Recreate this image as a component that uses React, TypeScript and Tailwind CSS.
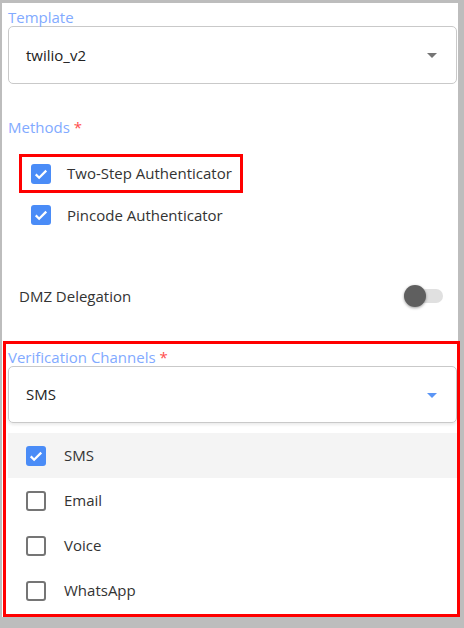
import React from "react";

const font = { fontFamily: '"Open Sans", "Liberation Sans", sans-serif' };

function Arrow({ color }: { color: string }) {
  return (
    <svg viewBox="0 0 24 24" className="w-6 h-6" fill={color}>
      <path d="M7 10l5 5 5-5z" />
    </svg>
  );
}

function Checked() {
  return (
    <div className="w-5 h-5 rounded-[3px] bg-[#4a8cf7] flex items-center justify-center shrink-0">
      <svg viewBox="0 0 24 24" className="w-[18px] h-[18px]" fill="none" stroke="white" strokeWidth="3">
        <path d="M5 12.5l4.5 4.5L19 7.5" />
      </svg>
    </div>
  );
}

function Unchecked() {
  return <div className="w-5 h-5 rounded-[3px] border-2 border-[#757575] shrink-0" />;
}

export default function App() {
  const channels = [
    { name: "SMS", on: true },
    { name: "Email", on: false },
    { name: "Voice", on: false },
    { name: "WhatsApp", on: false },
  ];

  return (
    <div className="w-[464px] h-[628px] bg-[#bdbdbd] overflow-hidden" style={font}>
      <div className="ml-[2px] mt-[3px] w-[456px] h-[614px] bg-white">
        <div className="pt-[5px] ml-[6px] h-[23px] leading-[18px] text-[15px] text-[#82aaff]">Template</div>
        <div className="ml-[6px] w-[449px] h-[58px] rounded-[5px] border border-[#c9c9c9] flex items-center justify-between pl-[17px] pr-[12px] text-[15px] text-[#222]">
          <span>twilio_v2</span>
          <Arrow color="#757575" />
        </div>

        <div className="mt-[34px] ml-[6px] h-[18px] leading-[18px] text-[15px] text-[#82aaff]">
          Methods <span className="text-[#ff4d4d]">*</span>
        </div>

        <div className="mt-[18px] ml-[17px] w-[224px] h-[39px] border-[3px] border-[#ff0000] flex items-center pl-[9px] gap-4 text-[15px] text-[#333]">
          <Checked />
          <span>Two-Step Authenticator</span>
        </div>
        <div className="mt-[2px] ml-[29px] h-[40px] flex items-center gap-4 text-[15px] text-[#333]">
          <Checked />
          <span>Pincode Authenticator</span>
        </div>

        <div className="mt-[41px] ml-[17px] mr-[14px] h-[40px] flex items-center justify-between text-[15px] text-[#333]">
          <span>DMZ Delegation</span>
          <div className="relative w-[40px] h-[22px] flex items-center">
            <div className="ml-[3px] w-[36px] h-[14px] rounded-full bg-[#e0e0e0]" />
            <div className="absolute left-0 top-0 w-[22px] h-[22px] rounded-full bg-[#5f5f5f] shadow-[0_1px_3px_rgba(0,0,0,0.4)]" />
          </div>
        </div>

        <div className="mt-[25px] ml-[1px] w-[457px] h-[276px] border-[3px] border-[#ff0000] pt-[4px]">
          <div className="pl-[2px] h-[18px] leading-[18px] text-[15px] text-[#82aaff]">
            Verification Channels <span className="text-[#ff4d4d]">*</span>
          </div>
          <div className="ml-[2px] w-[449px] h-[57px] rounded-[5px] border border-[#c9c9c9] shadow-[0_2px_3px_rgba(0,0,0,0.08)] flex items-center justify-between pl-[17px] pr-[12px] text-[15px] text-[#222]">
            <span>SMS</span>
            <Arrow color="#5b95f5" />
          </div>
          <div className="ml-[2px] w-[449px] mt-[10px]">
            {channels.map((c) => (
              <div
                key={c.name}
                className={`h-[45px] flex items-center pl-[18px] gap-[18px] text-[15px] text-[#333] ${c.on ? "bg-[#f4f4f4]" : "bg-white"}`}
              >
                {c.on ? <Checked /> : <Unchecked />}
                <span>{c.name}</span>
              </div>
            ))}
          </div>
        </div>
      </div>
    </div>
  );
}
